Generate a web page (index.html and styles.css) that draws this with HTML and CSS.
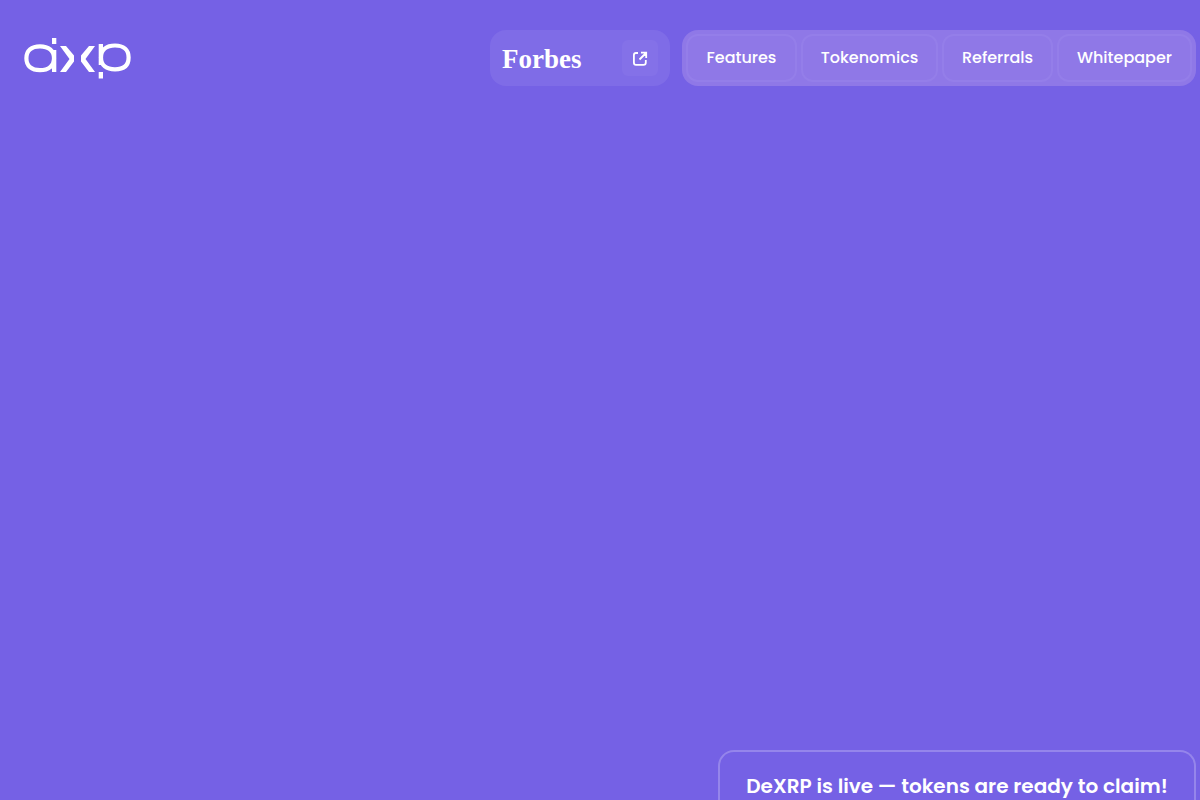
FILE: index.html
```html
<!DOCTYPE html>
<html lang="en">
<head>
<meta charset="utf-8">
<meta name="viewport" content="width=device-width, initial-scale=1">
<title>DeXRP</title>
<link rel="stylesheet" href="styles.css">
</head>
<body>
<header class="header">
  <a class="logo" href="#" aria-label="DeXRP">
    <svg width="108" height="42" viewBox="0 0 108 42" fill="none" aria-hidden="true">
      <path d="M30 21.300C30 13.500 24.500 9.400 16 9.400S2.400 13.500 2.400 21.300S7.500 33.200 16 33.200S30 29 30 21.300Z" stroke="#fff" stroke-width="4.200"/>
      <path d="M28 13h4.300v22H28zM28 1h4.300v6H28z" fill="#fff"/>
      <path d="M36 9h6L50 18.500v6L42 35H36L45.500 22z" fill="#fff"/>
      <path d="M71 9h-6L57 18.500v6L65 35H71L61.500 22z" fill="#fff"/>
      <path d="M77 20.500C77 12.500 82.500 8.500 91 8.500S104.600 12.500 104.600 20.500S99.500 32.300 91 32.300S77 28.500 77 20.500Z" stroke="#fff" stroke-width="4.200"/>
      <path d="M74.700 7H79v21h-4.300zM74.700 35H79v6.500h-4.300z" fill="#fff"/>
    </svg>
  </a>
  <div class="actions">
    <a class="press" href="#">
      <span class="press-name">Forbes</span>
      <span class="press-icon">
        <svg width="16" height="16" viewBox="0 0 16 16" fill="none" stroke="#fff" stroke-width="1.800" aria-hidden="true">
          <path d="M6 3H4Q1.900 3 1.900 5V12.500Q1.900 14.900 4 14.900H11.500Q13.800 14.900 13.800 12.500V10M9 2.700h5.200v5.200M14 3L7.500 9.500"/>
        </svg>
      </span>
    </a>
    <nav class="nav">
      <a class="nav-link" href="#features">Features</a>
      <a class="nav-link" href="#tokenomics">Tokenomics</a>
      <a class="nav-link" href="#referrals">Referrals</a>
      <a class="nav-link" href="#whitepaper">Whitepaper</a>
    </nav>
  </div>
</header>
<main class="main">
  <section class="claim">
    <h1 class="claim-title">DeXRP is live — tokens are ready to claim!</h1>
  </section>
</main>
</body>
</html>
```
FILE: styles.css
```css
* {
  box-sizing: border-box;
}

body {
  margin: 0;
  height: 100vh;
  overflow: hidden;
  display: flex;
  flex-direction: column;
  background: #7561e5;
  color: #fff;
  font-family: Poppins, Inter, sans-serif;
}

a {
  color: inherit;
  text-decoration: none;
}

.header {
  display: flex;
  align-items: center;
  justify-content: space-between;
  padding: 30px 4px 0 24px;
}

.logo svg {
  display: block;
}

.actions {
  display: flex;
  gap: 12px;
}

.press {
  display: flex;
  align-items: center;
  justify-content: space-between;
  width: 180px;
  height: 56px;
  padding: 0 12px;
  border-radius: 16px;
  background: #7f6ce7;
}

.press-name {
  padding-top: 2px;
  font: bold 27px/32px "Liberation Serif", serif;
}

.press-icon {
  display: grid;
  place-items: center;
  width: 36px;
  height: 36px;
  border-radius: 6px;
  background: #8471e8;
}

.nav {
  display: grid;
  grid-template-columns: 111fr 137fr 111fr 135fr;
  gap: 4px;
  width: 514px;
  padding: 4px;
  border-radius: 16px;
  background: #8f78e7;
}

.nav-link {
  display: flex;
  align-items: center;
  justify-content: center;
  height: 48px;
  padding-bottom: 2px;
  border: 2px solid #947ee9;
  border-radius: 12px;
  font-size: 16px;
  font-weight: 500;
}

.main {
  flex: 1;
  display: flex;
  align-items: flex-end;
  justify-content: flex-end;
  padding: 0 4px;
}

.claim {
  width: 478px;
  height: 50px;
  padding-top: 19px;
  border: 2px solid #9585eb;
  border-bottom: 0;
  border-radius: 16px 16px 0 0;
  text-align: center;
}

.claim-title {
  margin: 0;
  font-size: 20px;
  line-height: 30px;
  font-weight: 600;
  white-space: nowrap;
}
```
